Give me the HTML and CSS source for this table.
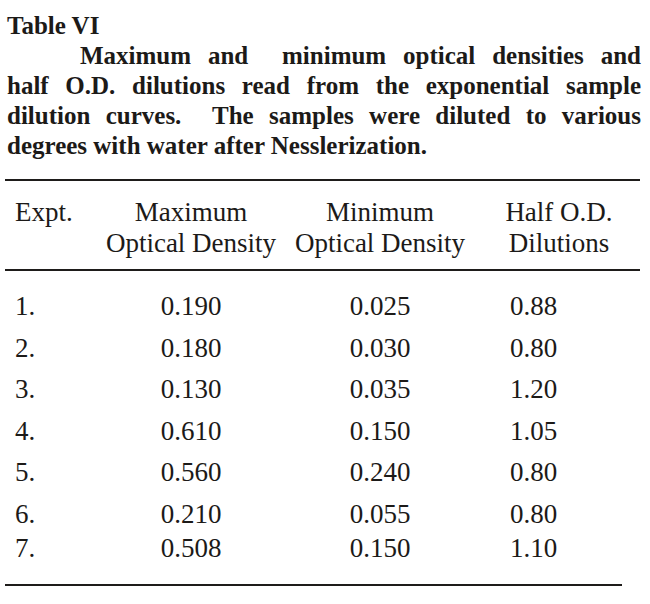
FILE: index.html
```html
<!DOCTYPE html>
<html lang="en">
<head>
<meta charset="utf-8">
<title>Table VI</title>
<link rel="stylesheet" href="styles.css">
</head>
<body>
<div class="page">
  <div class="caption">
    <div class="title">Table VI</div>
    <div class="line line-first">Maximum and &nbsp;minimum optical densities and</div>
    <div class="line">half O.D. dilutions read from the exponential sample</div>
    <div class="line">dilution curves. &nbsp;The samples were diluted to various</div>
    <div class="line line-last">degrees with water after Nesslerization.</div>
  </div>
  <div class="rule"></div>
  <div class="grid head">
    <div class="c1">Expt.</div>
    <div class="c2">Maximum<br>Optical Density</div>
    <div class="c3">Minimum<br>Optical Density</div>
    <div class="c4">Half O.D.<br>Dilutions</div>
  </div>
  <div class="rule rule-mid"></div>
  <div class="body">
    <div class="grid row"><div class="c1">1.</div><div class="c2">0.190</div><div class="c3">0.025</div><div class="c4 num">0.88</div></div>
    <div class="grid row"><div class="c1">2.</div><div class="c2">0.180</div><div class="c3">0.030</div><div class="c4 num">0.80</div></div>
    <div class="grid row"><div class="c1">3.</div><div class="c2">0.130</div><div class="c3">0.035</div><div class="c4 num">1.20</div></div>
    <div class="grid row"><div class="c1">4.</div><div class="c2">0.610</div><div class="c3">0.150</div><div class="c4 num">1.05</div></div>
    <div class="grid row"><div class="c1">5.</div><div class="c2">0.560</div><div class="c3">0.240</div><div class="c4 num">0.80</div></div>
    <div class="grid row"><div class="c1">6.</div><div class="c2">0.210</div><div class="c3">0.055</div><div class="c4 num">0.80</div></div>
    <div class="grid row row-tight"><div class="c1">7.</div><div class="c2">0.508</div><div class="c3">0.150</div><div class="c4 num">1.10</div></div>
  </div>
  <div class="rule rule-end"></div>
</div>
</body>
</html>
```

FILE: styles.css
```css
html, body {
  margin: 0;
  padding: 0;
  background: #ffffff;
}

.page {
  width: 650px;
  height: 604px;
  padding-top: 11px;
  box-sizing: border-box;
  color: #1c1a18;
  font-family: "Liberation Serif", "Times New Roman", serif;
}

.caption {
  margin-left: 7px;
  width: 634px;
  font-weight: bold;
  font-size: 25px;
  line-height: 30px;
}

.line {
  white-space: nowrap;
  text-align: justify;
  text-align-last: justify;
}

.line-first {
  padding-left: 73px;
}

.line-last {
  text-align: left;
  text-align-last: left;
}

.rule {
  margin-left: 5px;
  width: 635px;
  height: 2px;
  background: #1e1c1a;
  margin-top: 18px;
}

.rule-mid {
  margin-top: 10px;
}

.rule-end {
  margin-top: 14px;
  width: 617px;
}

.grid {
  display: grid;
  grid-template-columns: 100px 172px 206px 152px;
  margin-left: 5px;
  font-size: 27px;
  white-space: nowrap;
}

.head {
  margin-top: 16px;
  line-height: 31px;
  text-align: center;
}

.head .c1 {
  text-align: left;
  padding-left: 10px;
}

.body {
  margin-top: 15px;
}

.row {
  line-height: 41.5px;
  text-align: center;
}

.row-tight {
  margin-top: -7px;
}

.row .c1 {
  text-align: left;
  padding-left: 10px;
}

.row .num {
  text-align: left;
  padding-left: 27px;
}
```
